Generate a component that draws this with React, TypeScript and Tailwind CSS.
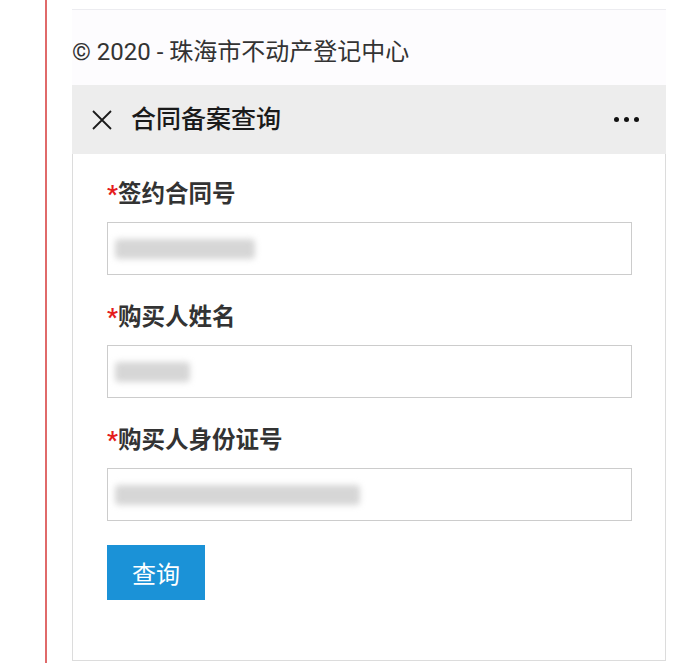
import React from 'react';

const fields = [
  { label: '签约合同号', blur: 'w-[140px]' },
  { label: '购买人姓名', blur: 'w-[75px]' },
  { label: '购买人身份证号', blur: 'w-[245px]' },
];

const App: React.FC = () => {
  return (
    <div className="min-h-[663px] bg-white flex font-['Roboto','Noto_Sans_CJK_SC',sans-serif]">
      <div className="w-[45px] shrink-0" />
      <div className="flex-1 border-l-2 border-[#e06a6a] pl-[25px] pr-[34px]">
        <div className="h-[9px] bg-white" />
        <div className="border-t border-[#ececf0] bg-[#fdfcfe] h-[76px] flex items-center pt-[8px]">
          <p className="text-[24px] text-[#333] leading-none">© 2020 - 珠海市不动产登记中心</p>
        </div>

        {/* title bar */}
        <div className="h-[69px] bg-[#ededed] flex items-center pl-[19px] pr-[27px]">
          <svg width="22" height="22" viewBox="0 0 22 22" className="shrink-0">
            <path d="M2 2 L20 20 M20 2 L2 20" stroke="#1a1a1a" strokeWidth="1.8" fill="none" />
          </svg>
          <h1 className="ml-[18px] text-[25px] font-medium text-[#1a1a1a] leading-none">合同备案查询</h1>
          <div className="ml-auto flex gap-[5px]">
            <span className="w-[5px] h-[5px] rounded-full bg-[#111]" />
            <span className="w-[5px] h-[5px] rounded-full bg-[#111]" />
            <span className="w-[5px] h-[5px] rounded-full bg-[#111]" />
          </div>
        </div>

        {/* form card */}
        <div className="border border-t-0 border-[#dcdcdc] pl-[34px] pr-[33px] pt-[25px] pb-[60px]">
          {fields.map((f, i) => (
            <div key={f.label} className={i > 0 ? 'mt-[27px]' : ''}>
              <label className="block h-[30px] leading-[30px] text-[23.5px] font-bold text-[#333]">
                <span className="text-[#e51c1c] text-[24px]">*</span>
                {f.label}
              </label>
              <div className="mt-[13px] h-[53px] border border-[#cccccc] bg-white flex items-center pl-[7px]">
                <div className={`${f.blur} h-[20px] bg-[#d6d6d6] blur-[3px] rounded-sm`} />
              </div>
            </div>
          ))}
          <button className="mt-[24px] w-[98px] h-[55px] bg-[#1b92d7] text-white text-[24px] font-['Noto_Sans_CJK_SC',sans-serif]">
            查询
          </button>
        </div>
      </div>
    </div>
  );
};

export default App;
